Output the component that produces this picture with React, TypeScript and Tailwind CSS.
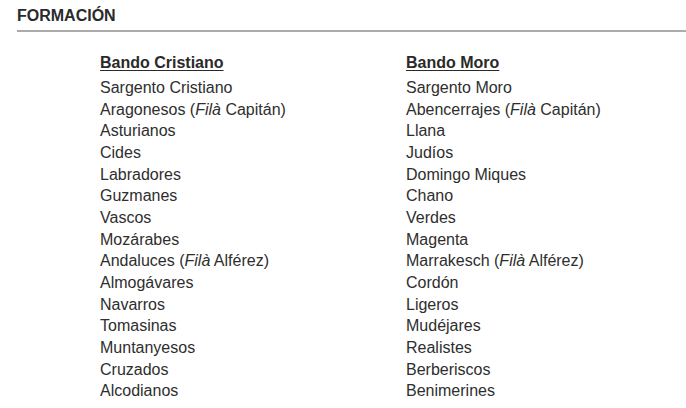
const cristianos: React.ReactNode[] = [
  "Sargento Cristiano",
  <>Aragonesos (<i>Filà</i> Capitán)</>,
  "Asturianos",
  "Cides",
  "Labradores",
  "Guzmanes",
  "Vascos",
  "Mozárabes",
  <>Andaluces (<i>Filà</i> Alférez)</>,
  "Almogávares",
  "Navarros",
  "Tomasinas",
  "Muntanyesos",
  "Cruzados",
  "Alcodianos",
];

const moros: React.ReactNode[] = [
  "Sargento Moro",
  <>Abencerrajes (<i>Filà</i> Capitán)</>,
  "Llana",
  "Judíos",
  "Domingo Miques",
  "Chano",
  "Verdes",
  "Magenta",
  <>Marrakesch (<i>Filà</i> Alférez)</>,
  "Cordón",
  "Ligeros",
  "Mudéjares",
  "Realistes",
  "Berberiscos",
  "Benimerines",
];

function Column({ title, items }: { title: string; items: React.ReactNode[] }) {
  return (
    <div className="w-[306px] shrink-0">
      <h3 className="mb-[4px] text-[16px] font-bold leading-[21px] text-[#2a2a2a] underline decoration-1 underline-offset-2">
        {title}
      </h3>
      <ul>
        {items.map((item, i) => (
          <li key={i} className="text-[16px] leading-[21.65px] text-[#2e2e2e]">
            {item}
          </li>
        ))}
      </ul>
    </div>
  );
}

export default function App() {
  return (
    <div
      className="h-[408px] w-[686px] overflow-hidden bg-white pl-[17px] pt-[7px]"
      style={{ fontFamily: "'Liberation Sans', Arial, sans-serif" }}
    >
      <h2 className="text-[16px] font-bold leading-[18px] text-[#2a2a2a]">FORMACIÓN</h2>
      <div className="mt-[5px] h-[2px] bg-[#ababab]" />
      <div className="flex pl-[83px] pt-[20px]">
        <Column title="Bando Cristiano" items={cristianos} />
        <Column title="Bando Moro" items={moros} />
      </div>
    </div>
  );
}
